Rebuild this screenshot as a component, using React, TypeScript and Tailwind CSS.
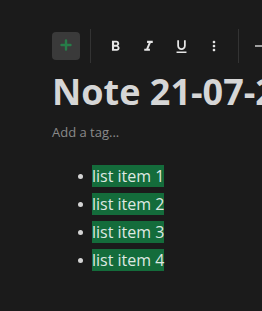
import React from "react";

const items = ["list item 1", "list item 2", "list item 3", "list item 4"];

function Btn({ children }: { children: React.ReactNode }) {
  return (
    <div className="w-[28px] h-[28px] shrink-0 flex items-center justify-center rounded text-[#e6e6e6]">
      {children}
    </div>
  );
}

export default function App() {
  return (
    <div
      className="w-full h-[311px] bg-[#1b1b1b] overflow-hidden"
      style={{ fontFamily: '"Open Sans", "Noto Sans", sans-serif' }}
    >
      <div className="pt-[29px] pl-[52px] flex items-center whitespace-nowrap">
        <div className="w-[28px] h-[28px] shrink-0 rounded-[4px] bg-[#3a3a3a] flex items-center justify-center">
          <svg width="12" height="12" viewBox="0 0 12 12" className="-mt-[2px] -ml-[1px]">
            <path d="M6 1.5v9M1.5 6h9" stroke="#1f9a4f" strokeWidth="2.4" strokeLinecap="round" opacity="0.7" />
          </svg>
        </div>
        <div className="w-px h-[34px] bg-[#333333] mx-[10px] shrink-0" />
        <div className="flex items-center gap-[5px]">
          <Btn>
            <svg width="17" height="17" viewBox="0 0 24 24" fill="currentColor">
              <path d="M15.6 10.79c.97-.67 1.65-1.77 1.65-2.79 0-2.26-1.75-4-4-4H7v14h7.04c2.09 0 3.71-1.7 3.71-3.79 0-1.52-.86-2.82-2.15-3.42zM10 6.5h3c.83 0 1.5.67 1.5 1.5s-.67 1.5-1.5 1.5h-3v-3zm3.5 9H10v-3h3.5c.83 0 1.5.67 1.5 1.5s-.67 1.5-1.5 1.5z" />
            </svg>
          </Btn>
          <Btn>
            <svg width="17" height="17" viewBox="0 0 24 24" fill="currentColor">
              <path d="M10 4v3h2.21l-3.42 8H6v3h8v-3h-2.21l3.42-8H18V4z" />
            </svg>
          </Btn>
          <Btn>
            <svg width="17" height="17" viewBox="0 0 24 24" fill="currentColor">
              <path d="M12 17c3.31 0 6-2.69 6-6V3h-2.5v8c0 1.93-1.57 3.5-3.5 3.5S8.5 12.93 8.5 11V3H6v8c0 3.31 2.69 6 6 6zm-7 2v2h14v-2H5z" />
            </svg>
          </Btn>
          <Btn>
            <svg width="16" height="16" viewBox="0 0 24 24" fill="currentColor">
              <path d="M12 8c1.1 0 2-.9 2-2s-.9-2-2-2-2 .9-2 2 .9 2 2 2zm0 2c-1.1 0-2 .9-2 2s.9 2 2 2 2-.9 2-2-.9-2-2-2zm0 6c-1.1 0-2 .9-2 2s.9 2 2 2 2-.9 2-2-.9-2-2-2z" />
            </svg>
          </Btn>
        </div>
        <div className="w-px h-[34px] bg-[#333333] mx-[10px] shrink-0" />
        <div className="w-[28px] h-[28px] shrink-0 flex items-center pl-[6px]">
          <div className="w-[16px] h-[2px] bg-[#a0a0a0]" />
        </div>
      </div>

      <div className="pl-[52px] mt-[7px] whitespace-nowrap text-[36px] leading-[44px] font-bold text-[#d6d6d6]">
        Note 21-07-2021
      </div>

      <div className="pl-[52px] mt-[9px] text-[13px] leading-[18px] text-[#8a8a8a]">
        Add a tag...
      </div>

      <ul className="mt-[21px] pl-[78px] flex flex-col">
        {items.map((t) => (
          <li key={t} className="flex items-center h-[28px]">
            <span className="w-[5px] h-[5px] rounded-full bg-[#d4d4d4] shrink-0" />
            <span className="ml-[9px] text-[16px] leading-[28px] text-[#dfe8e2]">
              <span className="bg-[#146c3b]">{t}</span>
            </span>
          </li>
        ))}
      </ul>
    </div>
  );
}
